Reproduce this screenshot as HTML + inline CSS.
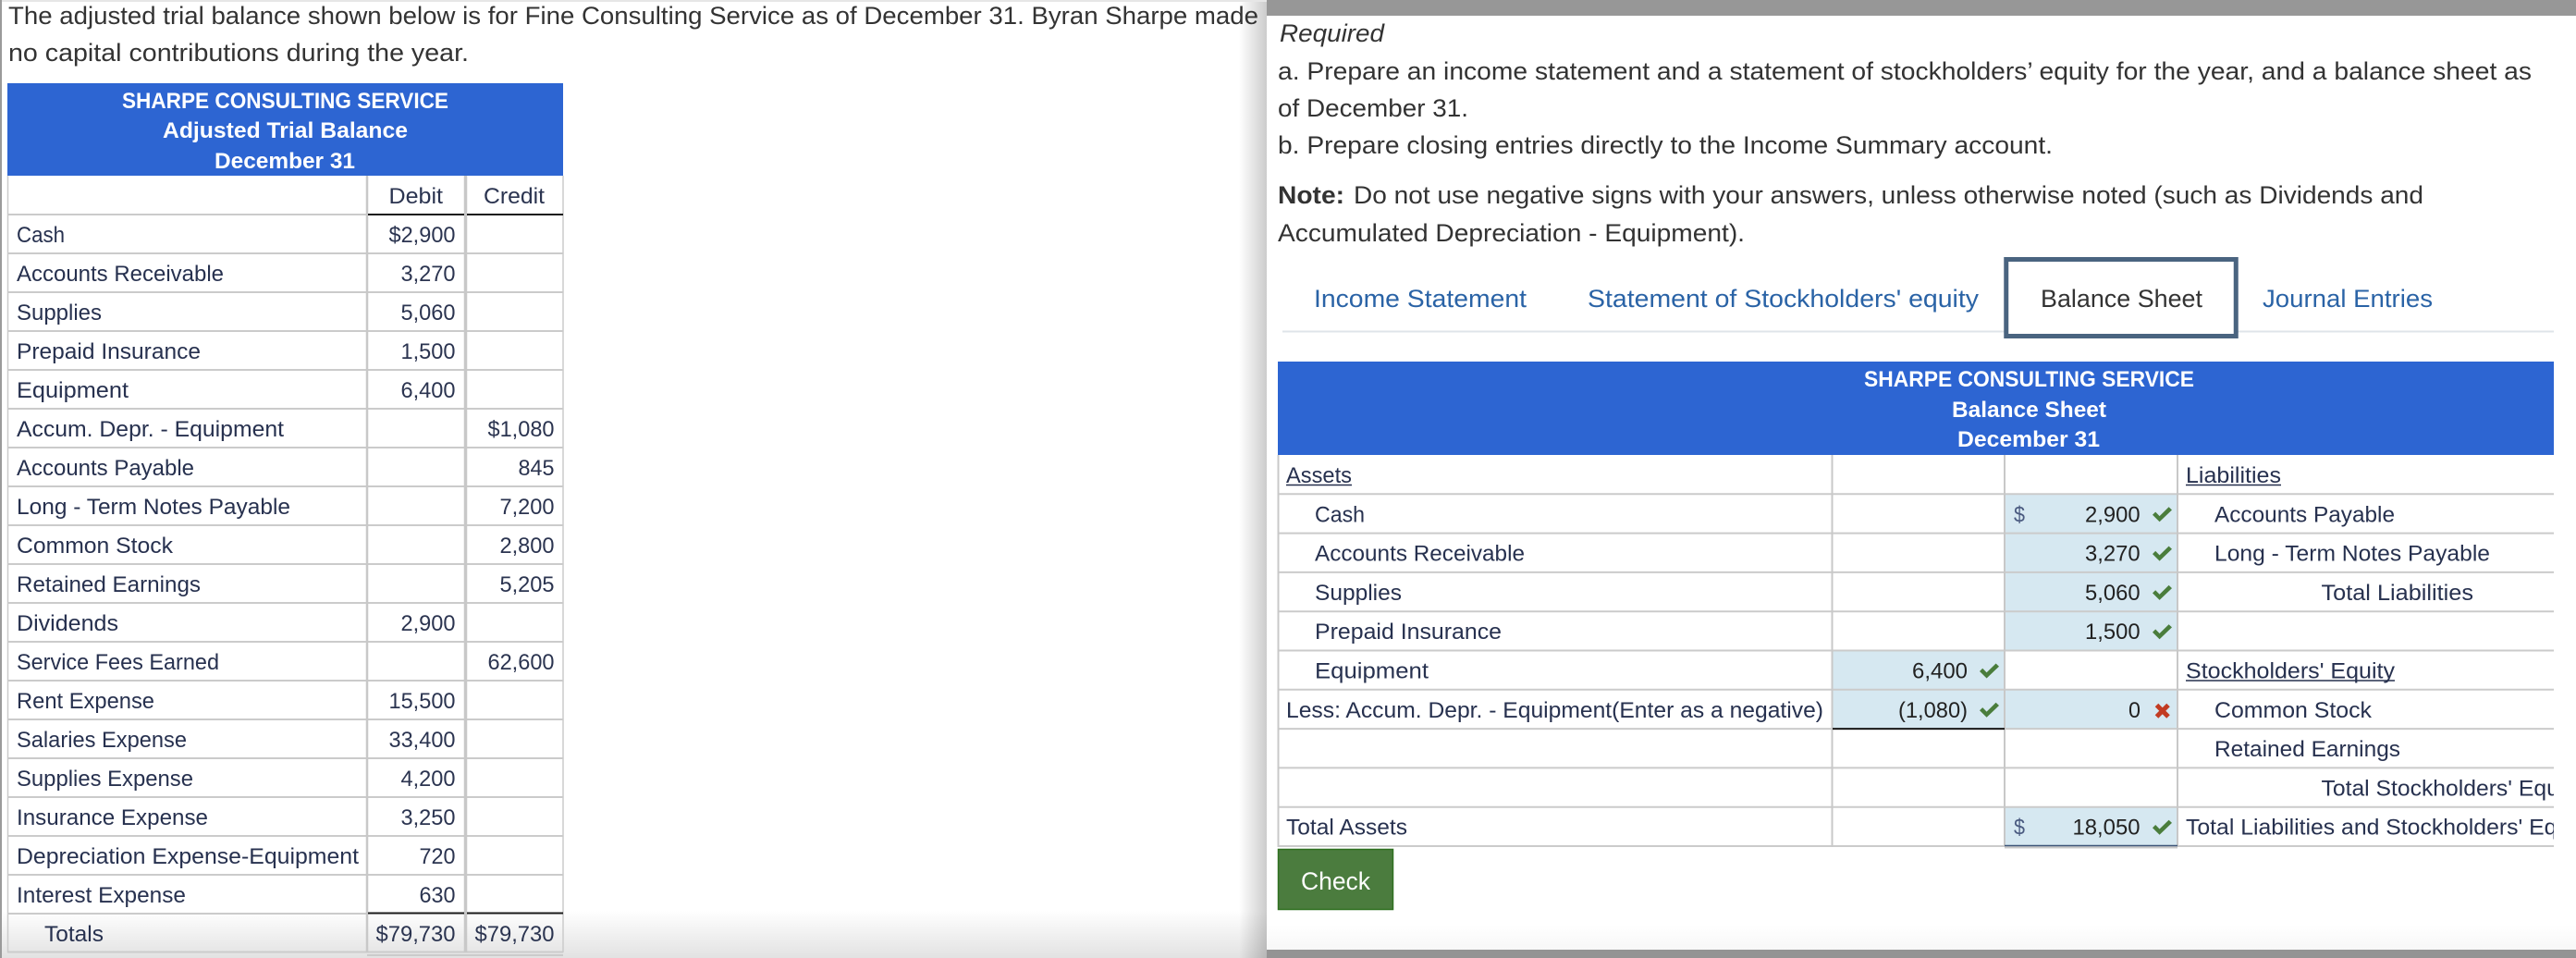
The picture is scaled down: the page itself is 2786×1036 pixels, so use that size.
<!DOCTYPE html>
<html lang="en">
<head>
<meta charset="utf-8">
<title>Sharpe Consulting Service</title>
<style>
html,body{margin:0;padding:0;background:#fff;width:2786px;height:1036px;overflow:hidden}
svg{display:block;filter:blur(0.35px)}
text{font-family:"Liberation Sans",sans-serif;white-space:pre}
.p{font-size:27px;fill:#333}
.h{font-size:24.5px;font-weight:bold;fill:#fff}
.l{font-size:24px;fill:#27314f}
.n{font-size:24px;fill:#2b3450}
.v{font-size:24px;fill:#222}
.t{font-size:27px;fill:#2a63a6}
</style>
</head>
<body>
<svg xmlns="http://www.w3.org/2000/svg" width="2786" height="1036" viewBox="0 0 2786 1036">
<defs>
<linearGradient id="gb" x1="0" y1="0" x2="0" y2="1"><stop offset="0" stop-color="#fff"/><stop offset="1" stop-color="#e2e2e2"/></linearGradient>
<linearGradient id="gb2" x1="0" y1="0" x2="0" y2="1"><stop offset="0" stop-color="#fff"/><stop offset="1" stop-color="#f7f7f7"/></linearGradient>
<linearGradient id="gs" x1="0" y1="0" x2="1" y2="0"><stop offset="0" stop-color="#000" stop-opacity="0"/><stop offset="1" stop-color="#000" stop-opacity=".2"/></linearGradient>
<path id="ck" d="M0 8.5L3.2 5.3 7.6 9.8 17.6 0 21 3.2 7.6 16Z" fill="#4a7d3c"/>
<clipPath id="tc"><rect x="1382" y="380" width="1380" height="560"/></clipPath>
</defs>

<rect width="2786" height="1036" fill="#fff"/>
<rect x="0" y="985" width="1370" height="51" fill="url(#gb)"/>
<rect x="1340" y="0" width="30" height="1036" fill="url(#gs)"/>
<rect x="0" y="0" width="1370" height="2" fill="#e6e6e6"/>
<rect x="0" y="0" width="2" height="1036" fill="#9a9a9a"/>

<!-- left intro -->
<text class="p" x="9" y="26" textLength="1352" lengthAdjust="spacingAndGlyphs">The adjusted trial balance shown below is for Fine Consulting Service as of December 31. Byran Sharpe made</text>
<text class="p" x="9" y="66" textLength="498" lengthAdjust="spacingAndGlyphs">no capital contributions during the year.</text>

<!-- left table -->
<rect x="8" y="90" width="601" height="100" fill="#2d65d2"/>
<text class="h" x="132" y="117" textLength="353" lengthAdjust="spacingAndGlyphs">SHARPE CONSULTING SERVICE</text>
<text class="h" x="176" y="149" textLength="265" lengthAdjust="spacingAndGlyphs">Adjusted Trial Balance</text>
<text class="h" x="232" y="182" textLength="152" lengthAdjust="spacingAndGlyphs">December 31</text>

<path fill="none" stroke="#cbcbcb" stroke-width="2" d="M8 232H397M8 274H609M8 316H609M8 358H609M8 400H609M8 442H609M8 484H609M8 526H609M8 568H609M8 610H609M8 652H609M8 694H609M8 736H609M8 778H609M8 820H609M8 862H609M8 904H609M8 946H609M8 988H397M8 1029.5H609M397 1033H609"/>
<path fill="none" stroke="#cbcbcb" d="M8.5 190V1030M609 190V1030" stroke-width="1.5"/>
<path fill="none" stroke="#c8c8c8" d="M397 190V1030" stroke-width="2.5"/>
<path fill="none" stroke="#c8c8c8" d="M503.5 190V1030" stroke-width="3.5"/>
<path fill="none" stroke="#1a1a1a" stroke-width="2" d="M398 232H502M505 232H609M398 987.5H502M505 987.5H609"/>

<text class="n" x="420.5" y="220" textLength="58.5" lengthAdjust="spacingAndGlyphs">Debit</text>
<text class="n" x="523" y="220" textLength="66" lengthAdjust="spacingAndGlyphs">Credit</text>

<text class="l" x="18" y="262" textLength="52" lengthAdjust="spacingAndGlyphs">Cash</text>
<text class="l" x="18" y="304" textLength="224" lengthAdjust="spacingAndGlyphs">Accounts Receivable</text>
<text class="l" x="18" y="346" textLength="92" lengthAdjust="spacingAndGlyphs">Supplies</text>
<text class="l" x="18" y="388" textLength="199" lengthAdjust="spacingAndGlyphs">Prepaid Insurance</text>
<text class="l" x="18" y="430" textLength="121" lengthAdjust="spacingAndGlyphs">Equipment</text>
<text class="l" x="18" y="472" textLength="289" lengthAdjust="spacingAndGlyphs">Accum. Depr. - Equipment</text>
<text class="l" x="18" y="514" textLength="192" lengthAdjust="spacingAndGlyphs">Accounts Payable</text>
<text class="l" x="18" y="556" textLength="296" lengthAdjust="spacingAndGlyphs">Long - Term Notes Payable</text>
<text class="l" x="18" y="598" textLength="169" lengthAdjust="spacingAndGlyphs">Common Stock</text>
<text class="l" x="18" y="640" textLength="199" lengthAdjust="spacingAndGlyphs">Retained Earnings</text>
<text class="l" x="18" y="682" textLength="110" lengthAdjust="spacingAndGlyphs">Dividends</text>
<text class="l" x="18" y="724" textLength="219" lengthAdjust="spacingAndGlyphs">Service Fees Earned</text>
<text class="l" x="18" y="766" textLength="149" lengthAdjust="spacingAndGlyphs">Rent Expense</text>
<text class="l" x="18" y="808" textLength="184" lengthAdjust="spacingAndGlyphs">Salaries Expense</text>
<text class="l" x="18" y="850" textLength="191" lengthAdjust="spacingAndGlyphs">Supplies Expense</text>
<text class="l" x="18" y="892" textLength="207" lengthAdjust="spacingAndGlyphs">Insurance Expense</text>
<text class="l" x="18" y="934" textLength="370" lengthAdjust="spacingAndGlyphs">Depreciation Expense-Equipment</text>
<text class="l" x="18" y="976" textLength="183" lengthAdjust="spacingAndGlyphs">Interest Expense</text>
<text class="l" x="48" y="1018" textLength="64" lengthAdjust="spacingAndGlyphs">Totals</text>

<text class="n" x="420.5" y="262" textLength="72" lengthAdjust="spacingAndGlyphs">$2,900</text>
<text class="n" x="433.5" y="304" textLength="59" lengthAdjust="spacingAndGlyphs">3,270</text>
<text class="n" x="433.5" y="346" textLength="59" lengthAdjust="spacingAndGlyphs">5,060</text>
<text class="n" x="433.5" y="388" textLength="59" lengthAdjust="spacingAndGlyphs">1,500</text>
<text class="n" x="433.5" y="430" textLength="59" lengthAdjust="spacingAndGlyphs">6,400</text>
<text class="n" x="527.5" y="472" textLength="72" lengthAdjust="spacingAndGlyphs">$1,080</text>
<text class="n" x="560.5" y="514" textLength="39" lengthAdjust="spacingAndGlyphs">845</text>
<text class="n" x="540.5" y="556" textLength="59" lengthAdjust="spacingAndGlyphs">7,200</text>
<text class="n" x="540.5" y="598" textLength="59" lengthAdjust="spacingAndGlyphs">2,800</text>
<text class="n" x="540.5" y="640" textLength="59" lengthAdjust="spacingAndGlyphs">5,205</text>
<text class="n" x="433.5" y="682" textLength="59" lengthAdjust="spacingAndGlyphs">2,900</text>
<text class="n" x="527.5" y="724" textLength="72" lengthAdjust="spacingAndGlyphs">62,600</text>
<text class="n" x="420.5" y="766" textLength="72" lengthAdjust="spacingAndGlyphs">15,500</text>
<text class="n" x="420.5" y="808" textLength="72" lengthAdjust="spacingAndGlyphs">33,400</text>
<text class="n" x="433.5" y="850" textLength="59" lengthAdjust="spacingAndGlyphs">4,200</text>
<text class="n" x="433.5" y="892" textLength="59" lengthAdjust="spacingAndGlyphs">3,250</text>
<text class="n" x="453.5" y="934" textLength="39" lengthAdjust="spacingAndGlyphs">720</text>
<text class="n" x="453.5" y="976" textLength="39" lengthAdjust="spacingAndGlyphs">630</text>
<text class="n" x="406.5" y="1018" textLength="86" lengthAdjust="spacingAndGlyphs">$79,730</text>
<text class="n" x="513.5" y="1018" textLength="86" lengthAdjust="spacingAndGlyphs">$79,730</text>

<!-- right panel -->
<rect x="1370" y="0" width="1416" height="1036" fill="#fff"/>
<rect x="1370" y="1000" width="1416" height="27" fill="url(#gb2)"/>
<rect x="1370" y="0" width="1416" height="17" fill="#979797"/>
<rect x="1370" y="1027" width="1416" height="9" fill="#949494"/>

<text class="p" x="1384" y="45" font-style="italic" textLength="113" lengthAdjust="spacingAndGlyphs">Required</text>
<text class="p" x="1382" y="86" textLength="1356" lengthAdjust="spacingAndGlyphs">a. Prepare an income statement and a statement of stockholders’ equity for the year, and a balance sheet as</text>
<text class="p" x="1382" y="126" textLength="206" lengthAdjust="spacingAndGlyphs">of December 31.</text>
<text class="p" x="1382" y="166" textLength="838" lengthAdjust="spacingAndGlyphs">b. Prepare closing entries directly to the Income Summary account.</text>
<text class="p" x="1382" y="220" font-weight="bold" textLength="72" lengthAdjust="spacingAndGlyphs">Note:</text>
<text class="p" x="1464" y="220" textLength="1157" lengthAdjust="spacingAndGlyphs">Do not use negative signs with your answers, unless otherwise noted (such as Dividends and</text>
<text class="p" x="1382" y="261" textLength="505" lengthAdjust="spacingAndGlyphs">Accumulated Depreciation - Equipment).</text>

<!-- tabs -->
<path d="M1387 358.5H2762" stroke="#dfe4e9" stroke-width="2" fill="none"/>
<rect x="2169.75" y="280.5" width="248.5" height="83" fill="#fff" stroke="#4a6480" stroke-width="5"/>
<text class="t" x="1421" y="332" textLength="230" lengthAdjust="spacingAndGlyphs">Income Statement</text>
<text class="t" x="1717" y="332" textLength="423" lengthAdjust="spacingAndGlyphs">Statement of Stockholders' equity</text>
<text class="p" x="2207" y="332" textLength="175" lengthAdjust="spacingAndGlyphs">Balance Sheet</text>
<text class="t" x="2447" y="332" textLength="184" lengthAdjust="spacingAndGlyphs">Journal Entries</text>

<!-- balance sheet -->
<rect x="1382" y="391" width="1380" height="101" fill="#2d65d2"/>
<text class="h" x="2016" y="418" textLength="357" lengthAdjust="spacingAndGlyphs">SHARPE CONSULTING SERVICE</text>
<text class="h" x="2111" y="451" textLength="167" lengthAdjust="spacingAndGlyphs">Balance Sheet</text>
<text class="h" x="2117" y="483" textLength="154" lengthAdjust="spacingAndGlyphs">December 31</text>

<g fill="#d6e8f1">
<rect x="1982" y="703.5" width="186" height="84.6"/>
<rect x="2168" y="534.3" width="187" height="169.2"/>
<rect x="2168" y="745.8" width="187" height="42.3"/>
<rect x="2168" y="872.7" width="187" height="42.3"/>
</g>
<path fill="none" stroke="#cbcbcb" stroke-width="2" d="M1382 534.3H2762M1382 576.6H2762M1382 618.9H2762M1382 661.2H2762M1382 703.5H2762M1382 745.8H2762M1382 788.1H2762M1382 830.4H2762M1382 872.7H2762M1382 915H2762"/>
<path fill="none" stroke="#c8c8c8" stroke-width="2" d="M1382.5 492V916M1981.5 492V916M2168 492V916M2355 492V916"/>
<path fill="none" stroke="#1a1a1a" stroke-width="2" d="M1982 788.1H2168"/>
<path fill="none" stroke="#3d5578" stroke-width="1.5" d="M2168 914.5H2355"/>
<path fill="none" stroke="#c8c8c8" stroke-width="1.5" d="M2168 916.8H2355"/>

<g clip-path="url(#tc)">
<text class="l" x="1391" y="522" textLength="71" lengthAdjust="spacingAndGlyphs">Assets</text>
<text class="l" x="1422" y="564.3" textLength="54" lengthAdjust="spacingAndGlyphs">Cash</text>
<text class="l" x="1422" y="606.6" textLength="227" lengthAdjust="spacingAndGlyphs">Accounts Receivable</text>
<text class="l" x="1422" y="648.9" textLength="94" lengthAdjust="spacingAndGlyphs">Supplies</text>
<text class="l" x="1422" y="691.2" textLength="202" lengthAdjust="spacingAndGlyphs">Prepaid Insurance</text>
<text class="l" x="1422" y="733.5" textLength="123" lengthAdjust="spacingAndGlyphs">Equipment</text>
<text class="l" x="1391" y="775.8" textLength="581" lengthAdjust="spacingAndGlyphs">Less: Accum. Depr. - Equipment(Enter as a negative)</text>
<text class="l" x="1391" y="902.7" textLength="131" lengthAdjust="spacingAndGlyphs">Total Assets</text>

<text class="l" x="2364" y="522" textLength="103" lengthAdjust="spacingAndGlyphs">Liabilities</text>
<text class="l" x="2395" y="564.3" textLength="195" lengthAdjust="spacingAndGlyphs">Accounts Payable</text>
<text class="l" x="2395" y="606.6" textLength="298" lengthAdjust="spacingAndGlyphs">Long - Term Notes Payable</text>
<text class="l" x="2510.5" y="648.9" textLength="164.5" lengthAdjust="spacingAndGlyphs">Total Liabilities</text>
<text class="l" x="2364" y="733.5" textLength="226" lengthAdjust="spacingAndGlyphs">Stockholders' Equity</text>
<text class="l" x="2395" y="775.8" textLength="170" lengthAdjust="spacingAndGlyphs">Common Stock</text>
<text class="l" x="2395" y="818.1" textLength="201" lengthAdjust="spacingAndGlyphs">Retained Earnings</text>
<text class="l" x="2510.5" y="860.4" textLength="282" lengthAdjust="spacingAndGlyphs">Total Stockholders' Equity</text>
<text class="l" x="2364" y="902.7" textLength="440" lengthAdjust="spacingAndGlyphs">Total Liabilities and Stockholders' Equity</text>
</g>
<path fill="none" stroke="#27314f" stroke-width="1.6" d="M1391 524.5H1462M2364 524.5H2467M2364 736H2590"/>

<text class="l" x="2178" y="564.3" textLength="12" lengthAdjust="spacingAndGlyphs" style="fill:#4a5a80">$</text>
<text class="l" x="2178" y="902.7" textLength="12" lengthAdjust="spacingAndGlyphs" style="fill:#4a5a80">$</text>
<text class="v" x="2255" y="564.3" textLength="59.6" lengthAdjust="spacingAndGlyphs">2,900</text>
<text class="v" x="2255" y="606.6" textLength="59.6" lengthAdjust="spacingAndGlyphs">3,270</text>
<text class="v" x="2255" y="648.9" textLength="59.6" lengthAdjust="spacingAndGlyphs">5,060</text>
<text class="v" x="2255" y="691.2" textLength="59.6" lengthAdjust="spacingAndGlyphs">1,500</text>
<text class="v" x="2068" y="733.5" textLength="60" lengthAdjust="spacingAndGlyphs">6,400</text>
<text class="v" x="2053" y="775.8" textLength="75" lengthAdjust="spacingAndGlyphs">(1,080)</text>
<text class="v" x="2302" y="775.8" textLength="13" lengthAdjust="spacingAndGlyphs">0</text>
<text class="v" x="2241.5" y="902.7" textLength="73" lengthAdjust="spacingAndGlyphs">18,050</text>

<use href="#ck" x="2328" y="548.3"/>
<use href="#ck" x="2328" y="590.6"/>
<use href="#ck" x="2328" y="632.9"/>
<use href="#ck" x="2328" y="675.2"/>
<use href="#ck" x="2141" y="717.5"/>
<use href="#ck" x="2141" y="759.8"/>
<use href="#ck" x="2328" y="886.7"/>
<path d="M2332.5 762.5L2345 775M2345 762.5L2332.5 775" stroke="#c23b22" stroke-width="5" fill="none"/>

<!-- check button -->
<rect x="1382.5" y="918.5" width="124" height="65" fill="#4b7c3e" stroke="#2f7020" stroke-width="1.5"/>
<text x="1407" y="962" font-size="27" fill="#fff" textLength="75" lengthAdjust="spacingAndGlyphs">Check</text>
</svg>
</body>
</html>
